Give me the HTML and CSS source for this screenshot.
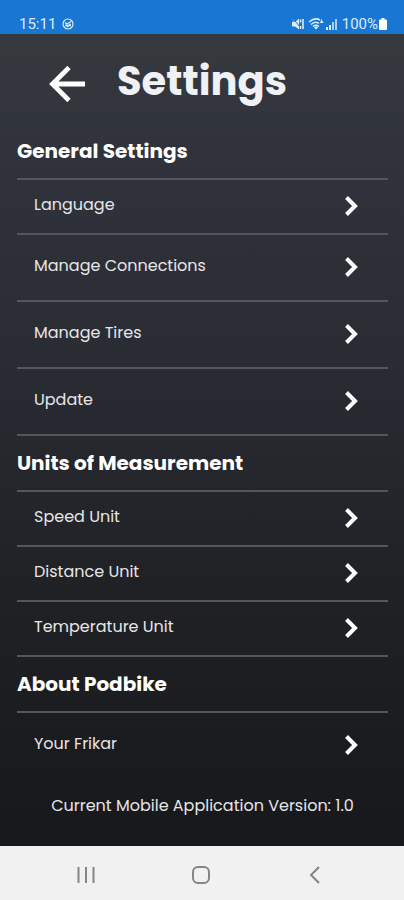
FILE: index.html
```html
<!DOCTYPE html>
<html lang="en">
<head>
<meta charset="utf-8">
<meta name="viewport" content="width=device-width, initial-scale=1">
<title>Settings</title>
<link rel="stylesheet" href="styles.css">
</head>
<body>
<svg class="symbols" aria-hidden="true">
  <symbol id="chevron" viewBox="0 0 14 22"><path d="M2.500 2.500 11 11l-8.500 8.500" fill="none" stroke="currentColor" stroke-width="4"/></symbol>
</svg>
<div class="status">
  <span class="time">15:11</span>
  <svg class="app-icon" viewBox="0 0 12 12" aria-hidden="true"><g fill="none" stroke="currentColor"><circle cx="6" cy="6" r="5" stroke-width="1.200"/><path d="M3 4.500 5 6 9 3.500M3 7.500h6M5 9 8.500 6" stroke-width="1.300"/></g></svg>
  <div class="signals">
    <svg class="mute" viewBox="0 0 12 12" aria-hidden="true"><path d="M0 1 3 4l4-3.500v11L3 8.500H0V4h2z" fill="currentColor"/><path d="M1 .5 8 9" stroke="#1976d2" stroke-width="1"/><path d="M8.500 1.500v3M8.500 8v3M11 1v10" stroke="currentColor" stroke-width="1.600"/></svg>
    <svg class="wifi" viewBox="0 0 16 12" aria-hidden="true"><path d="M1 4q6-5 11-2M3 6.500q4-4 8-1M5 8.500q3-2.500 6 0" fill="none" stroke="currentColor" stroke-width="1.500"/><path d="m6 9.500 2-1.500 2 1.500L8 11.500zM12 5l1.500-4L15.500 5z" fill="currentColor"/></svg>
    <svg class="bars" viewBox="0 0 12 12" aria-hidden="true"><path d="M0 9h2v3H0zM3 7h2v5H3z" fill="currentColor"/><path d="M6 4h2v8H6zM9 1h2v11H9z" fill="currentColor" opacity=".75"/></svg>
    <span>100%</span>
    <svg class="battery" viewBox="0 0 8 12" aria-hidden="true"><path d="M2.500 0h3v1.500H7q1 0 1 1V11q0 1-1 1H1q-1 0-1-1V2.500q0-1 1-1h1.500z" fill="currentColor"/></svg>
  </div>
</div>
<main class="app">
  <header class="header">
    <button class="back" type="button" aria-label="Back"><svg viewBox="0 0 36 36" aria-hidden="true"><path d="M36 18H4M20 1.500 3.500 18 20 34.500" fill="none" stroke="currentColor" stroke-width="4.800"/></svg></button>
    <h1>Settings</h1>
  </header>
  <section class="group">
    <h2>General Settings</h2>
    <a class="row compact" href="#language"><span>Language</span><svg><use href="#chevron"/></svg></a>
    <a class="row" href="#connections"><span>Manage Connections</span><svg><use href="#chevron"/></svg></a>
    <a class="row" href="#tires"><span>Manage Tires</span><svg><use href="#chevron"/></svg></a>
    <a class="row" href="#update"><span>Update</span><svg><use href="#chevron"/></svg></a>
  </section>
  <section class="group">
    <h2>Units of Measurement</h2>
    <a class="row compact" href="#speed"><span>Speed Unit</span><svg><use href="#chevron"/></svg></a>
    <a class="row compact" href="#distance"><span>Distance Unit</span><svg><use href="#chevron"/></svg></a>
    <a class="row compact" href="#temperature"><span>Temperature Unit</span><svg><use href="#chevron"/></svg></a>
  </section>
  <section class="group">
    <h2>About Podbike</h2>
    <a class="row last" href="#frikar"><span>Your Frikar</span><svg><use href="#chevron"/></svg></a>
  </section>
  <p class="version">Current Mobile Application Version: 1.0</p>
</main>
<nav class="system">
  <button type="button" aria-label="Recent apps"><svg viewBox="0 0 20 20" aria-hidden="true"><path d="M2.500 2v16M10 2v16M17.500 2v16"/></svg></button>
  <button type="button" aria-label="Home"><svg viewBox="0 0 20 20" aria-hidden="true"><rect x="2" y="2" width="16" height="16" rx="5"/></svg></button>
  <button type="button" aria-label="Go back"><svg viewBox="0 0 20 20" aria-hidden="true"><path d="M14 2 6 10l8 8"/></svg></button>
</nav>
</body>
</html>
```
FILE: styles.css
```css
* {
  box-sizing: border-box;
}

body {
  margin: 0;
  min-height: 100vh;
  display: flex;
  flex-direction: column;
  font-family: Poppins, Inter, sans-serif;
  font-size: 16px;
  color: #e6e6e8;
}

button {
  padding: 0;
  border: 0;
  background: none;
  color: inherit;
}

svg {
  display: block;
  flex: none;
}

.symbols {
  position: absolute;
  width: 0;
  height: 0;
}

.status {
  display: flex;
  align-items: center;
  height: 34px;
  padding: 14px 17px 0 19px;
  background: #1976d2;
  color: #dcebfa;
  font: 15px/20px Roboto, sans-serif;
}

.app-icon {
  width: 12px;
  height: 12px;
  margin-left: 6px;
}

.signals {
  display: flex;
  align-items: center;
  gap: 4px;
  margin-left: auto;
}

.mute,
.bars {
  width: 12px;
  height: 12px;
}

.wifi {
  width: 16px;
  height: 12px;
}

.bars {
  margin-left: -2px;
}

.battery {
  width: 8px;
  height: 12px;
  margin-left: -3px;
  color: #fff;
}

.app {
  flex: 1;
  padding: 0 16px 0 17px;
  background: linear-gradient(#363a3f, #30333b 14%, #292c33 40%, #202226 66%, #17181b);
}

.header {
  display: flex;
  align-items: center;
  gap: 32px;
  height: 90px;
  padding-left: 32px;
}

.back {
  margin-top: 10px;
  color: #fff;
}

.back svg {
  width: 36px;
  height: 36px;
}

h1 {
  margin: 0;
  padding-top: 3px;
  font-size: 40px;
  line-height: 48px;
  font-weight: 700;
  color: #f0f1f4;
}

h2 {
  margin: 0;
  padding-top: 1px;
  font-size: 20px;
  line-height: 53px;
  font-weight: 700;
  color: #fff;
  border-bottom: 2px solid #54565a;
}

.row {
  display: flex;
  align-items: center;
  justify-content: space-between;
  height: 67px;
  padding: 0 30px 2px 17px;
  border-bottom: 2px solid #54565a;
  color: inherit;
  text-decoration: none;
}

.row span {
  padding-bottom: 2px;
}

.row svg {
  width: 14px;
  height: 22px;
  color: #fff;
}

.compact {
  height: 55px;
}

.last {
  height: 65px;
  border-bottom: 0;
}

.version {
  margin: 0;
  padding: 16px 0;
  line-height: 24px;
  text-align: center;
}

.system {
  display: flex;
  justify-content: center;
  align-items: center;
  gap: 11%;
  height: 54px;
  padding: 3px 3px 0 0;
  background: #f1f1f1;
  color: #858585;
}

.system button {
  width: 70px;
}

.system svg {
  width: 20px;
  height: 20px;
  margin: 0 auto;
  fill: none;
  stroke: currentColor;
  stroke-width: 2;
}
```
